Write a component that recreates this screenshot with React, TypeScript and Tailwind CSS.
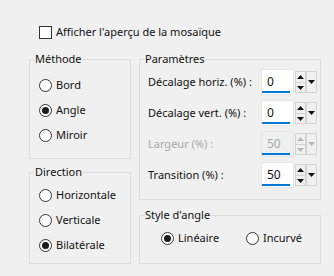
import React from "react";

function Radio({ checked, label }: { checked?: boolean; label: string }) {
  return (
    <div className="flex items-center h-4 gap-[4px] whitespace-nowrap">
      <span className="w-[13px] h-[13px] rounded-full border border-[#333333] bg-white flex items-center justify-center shrink-0">
        {checked && <span className="w-[7px] h-[7px] rounded-full bg-[#1a1a1a]" />}
      </span>
      <span>{label}</span>
    </div>
  );
}

function Tri({ up, color }: { up?: boolean; color: string }) {
  return (
    <svg width="7" height="4" viewBox="0 0 7 4" className="block">
      {up ? <polygon points="0,4 7,4 3.5,0" fill={color} /> : <polygon points="0,0 7,0 3.5,4" fill={color} />}
    </svg>
  );
}

function Spin({ value, disabled }: { value: string; disabled?: boolean }) {
  const c = disabled ? "#b5b5b5" : "#111111";
  return (
    <div className="flex items-center h-[26px] shrink-0">
      <div
        className={`w-[33px] h-[26px] border border-[#e6e6e6] flex flex-col ${disabled ? "bg-[#f0f0f0] text-[#a8a8a8]" : "bg-white text-[#111]"}`}
      >
        <div className="flex-1 flex items-center pl-[5px] pt-[2px] text-[12px]">{value}</div>
        <div className="h-[2px] mb-[1px] mr-[3px] bg-[#0078d7]" />
      </div>
      <div className="w-[11px] h-[22px] border border-[#d4d4d4] bg-[#f0f0f0] flex flex-col items-center justify-center gap-[3px] ml-[1px]">
        <Tri up color={c} />
        <div className="w-[9px] h-px bg-[#d4d4d4]" />
        <Tri color={c} />
      </div>
      <div className="w-[11px] h-[22px] border border-[#d4d4d4] bg-[#f0f0f0] flex items-center justify-center">
        <Tri color={c} />
      </div>
    </div>
  );
}

function Row({ label, value, disabled }: { label: string; value: string; disabled?: boolean }) {
  return (
    <div className="flex items-center h-[26px]">
      <div className={`flex-1 whitespace-nowrap ${disabled ? "text-[#a8a8a8]" : ""}`}>{label}</div>
      <Spin value={value} disabled={disabled} />
    </div>
  );
}

function Group({ title, className, children }: { title: string; className: string; children: React.ReactNode }) {
  return (
    <fieldset className={`border border-[#dcdcdc] ${className}`}>
      <legend className="ml-[4px] px-px leading-4">{title}</legend>
      {children}
    </fieldset>
  );
}

export default function App() {
  return (
    <div className="w-[334px] h-[276px] bg-[#f0f0f0] text-[11px] leading-4 text-[#111] font-['Noto_Sans',sans-serif] pt-[24px]">
      <div className="flex items-center gap-[4px] pl-[39px] h-[16px]">
        <span className="w-[13px] h-[13px] border border-[#333333] bg-white" />
        <span>Afficher l'aperçu de la mosaïque</span>
      </div>
      <div className="flex gap-[8px] pl-[29px] mt-[11px]">
        <div className="flex flex-col gap-[5px] w-[102px]">
          <Group title="Méthode" className="h-[108px]">
            <div className="flex flex-col gap-[9px] pl-[9px] pt-[10px]">
              <Radio label="Bord" />
              <Radio label="Angle" checked />
              <Radio label="Miroir" />
            </div>
          </Group>
          <Group title="Direction" className="h-[100px]">
            <div className="flex flex-col gap-[9px] pl-[9px] pt-[7px]">
              <Radio label="Horizontale" />
              <Radio label="Verticale" />
              <Radio label="Bilatérale" checked />
            </div>
          </Group>
        </div>
        <div className="flex flex-col gap-[7px] w-[182px]">
          <Group title="Paramètres" className="h-[149px]">
            <div className="flex flex-col gap-[5px] pl-[8px] pr-[3px] pt-[2px]">
              <Row label="Décalage horiz. (%) :" value="0" />
              <Row label="Décalage vert. (%) :" value="0" />
              <Row label="Largeur (%) :" value="50" disabled />
              <Row label="Transition (%) :" value="50" />
            </div>
          </Group>
          <Group title="Style d'angle" className="h-[57px]">
            <div className="flex pl-[21px] pt-[7px]">
              <div className="w-[85px]">
                <Radio label="Linéaire" checked />
              </div>
              <Radio label="Incurvé" />
            </div>
          </Group>
        </div>
      </div>
    </div>
  );
}
